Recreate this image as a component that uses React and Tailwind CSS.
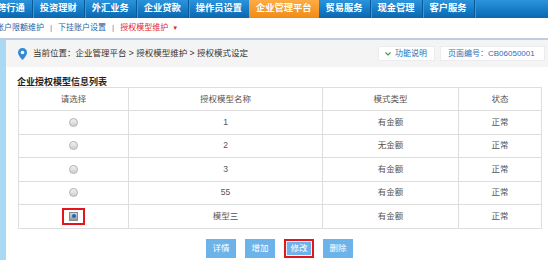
const navItems = ["跨行通", "投资理财", "外汇业务", "企业贷款", "操作员设置", "企业管理平台", "贸易服务", "现金管理", "客户服务"];
const activeNav = "企业管理平台";

const rows = [
  { name: "1", type: "有金额" },
  { name: "2", type: "无金额" },
  { name: "3", type: "有金额" },
  { name: "55", type: "有金额" },
  { name: "模型三", type: "有金额", checked: true },
];

function Divider() {
  return <div className="w-px h-full bg-[#0b5a98] shadow-[1px_0_0_#3b97da]" />;
}

function TopNav() {
  return (
    <div className="h-[18px] overflow-hidden bg-gradient-to-b from-[#2b93db] via-[#177ec9] to-[#0b67af]">
      <div className="flex h-full -ml-[10px]">
        {navItems.map((item, i) => {
          const active = item === activeNav;
          const next = navItems[i + 1];
          return (
            <div key={item} className="flex h-full">
              <div
                className={
                  "flex items-center px-[7px] text-[9.25px] font-bold text-white whitespace-nowrap " +
                  (active ? "bg-gradient-to-b from-[#fdac45] to-[#f18a0f]" : "")
                }
              >
                {item}
              </div>
              {!active && next !== activeNav && <Divider />}
            </div>
          );
        })}
      </div>
    </div>
  );
}

function SubNav() {
  return (
    <div className="h-[20px] flex items-center -ml-[4px] text-[8px] text-[#1f5f9f] whitespace-nowrap">
      <span>账户限额维护</span>
      <span className="mx-[6px] text-[#4f86bd]">|</span>
      <span>下挂账户设置</span>
      <span className="mx-[6px] text-[#4f86bd]">|</span>
      <span className="text-[#e0262b]">授权模型维护</span>
      <span className="ml-[4px] text-[6px] text-[#e0262b]">▼</span>
    </div>
  );
}

function Radio({ checked }) {
  if (checked) {
    return (
      <span className="inline-flex items-center justify-center w-[23px] h-[17px] border-2 border-[#e3161d] align-middle">
        <span className="flex items-center justify-center w-[9px] h-[9px] bg-gradient-to-b from-[#d4d4d4] to-[#9a9a9a] border border-[#8a8a8a]">
          <span className="w-[4px] h-[4px] rounded-full bg-[#1569c7]" />
        </span>
      </span>
    );
  }
  return (
    <span className="inline-block w-[9px] h-[9px] rounded-full border border-[#b5b5b5] bg-gradient-to-b from-[#f2f2f2] to-[#cfcfcf] align-middle" />
  );
}

export default function App() {
  return (
    <div className="w-[548px] h-[260px] overflow-hidden bg-white font-[family-name:'Liberation_Sans','Noto_Sans_CJK_SC',sans-serif]">
      <TopNav />
      <SubNav />
      <div className="flex h-[222px] border-t-2 border-[#bccfe2]">
        <div className="w-[6px] shrink-0 bg-[#aadaf3]" />
        <main className="flex-1">
          <div className="h-[27px] flex items-center pl-[12px] pr-[3px] bg-[#f4f4f4]">
            <svg width="9" height="12" viewBox="0 0 9 12" className="shrink-0">
              <path d="M4.5 0C2 0 0 2 0 4.5 0 7.5 4.5 12 4.5 12S9 7.5 9 4.5C9 2 7 0 4.5 0z" fill="#2f8ad9" />
              <circle cx="4.5" cy="4.5" r="1.8" fill="#fff" />
            </svg>
            <span className="ml-[6px] text-[8.5px] text-[#333] whitespace-nowrap">
              当前位置：企业管理平台 &gt; 授权模型维护 &gt; 授权模式设定
            </span>
            <div className="ml-auto flex gap-[5px]">
              <div className="w-[57px] h-[15px] flex items-center pl-[6px] bg-white border border-[#ececec] text-[8px] text-[#2a6cb0]">
                <svg width="6" height="4" viewBox="0 0 6 4" className="mr-[4px]">
                  <polyline points="0.5,0.5 3,3 5.5,0.5" fill="none" stroke="#3aa53a" strokeWidth="1.2" />
                </svg>
                功能说明
              </div>
              <div className="w-[105px] h-[15px] flex items-center pl-[7px] bg-white border border-[#ececec] text-[8px] text-[#2d6eb5] whitespace-nowrap">
                页面编号：CB06050001
              </div>
            </div>
          </div>

          <div className="ml-[11px] mt-[10px] text-[9px] leading-[10px] font-bold text-[#222]">企业授权模型信息列表</div>

          <table className="ml-[12px] w-[523px] border-collapse table-fixed text-[8.5px] text-[#555] text-center">
            <colgroup>
              <col className="w-[110px]" />
              <col className="w-[194px]" />
              <col className="w-[136px]" />
              <col className="w-[83px]" />
            </colgroup>
            <thead>
              <tr className="h-[23px]">
                {["请选择", "授权模型名称", "模式类型", "状态"].map((h) => (
                  <th key={h} className="border border-[#dedede] font-normal p-0">{h}</th>
                ))}
              </tr>
            </thead>
            <tbody>
              {rows.map((r) => (
                <tr key={r.name} className="h-[23.5px]">
                  <td className="border border-[#dedede] p-0 leading-none">
                    <Radio checked={r.checked} />
                  </td>
                  <td className="border border-[#dedede] p-0">{r.name}</td>
                  <td className="border border-[#dedede] p-0">{r.type}</td>
                  <td className="border border-[#dedede] p-0">正常</td>
                </tr>
              ))}
            </tbody>
          </table>

          <div className="ml-[12px] w-[523px] mt-[10px] flex justify-center gap-[9px]">
            {["详情", "增加", "修改", "删除"].map((b) => (
              <button
                key={b}
                className={
                  "w-[30px] h-[19px] bg-[#6cb3ea] text-white text-[8.5px] " +
                  (b === "修改" ? "shadow-[inset_0_0_0_2px_#e3161d,inset_0_0_0_3px_#e8f3fc]" : "")
                }
              >
                {b}
              </button>
            ))}
          </div>
        </main>
      </div>
    </div>
  );
}
